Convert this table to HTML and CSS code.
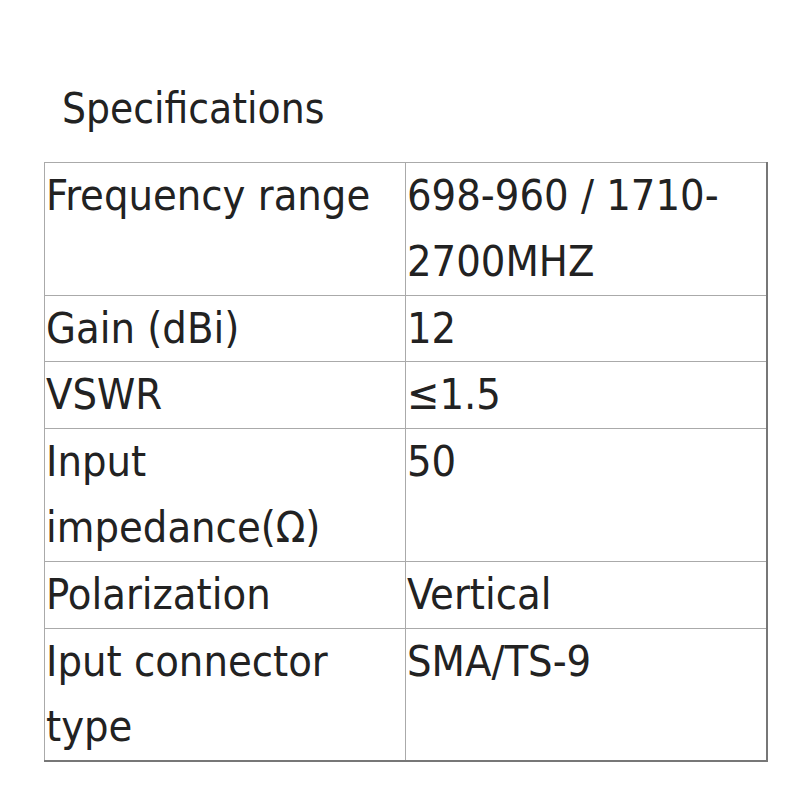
FILE: index.html
```html
<!DOCTYPE html>
<html>
<head>
<meta charset="utf-8">
<link rel="stylesheet" href="styles.css">
</head>
<body>
<div class="page">
  <h2 class="title">Specifications</h2>
  <table class="specs">
    <tr><td class="k">Frequency range</td><td class="v">698-960 / 1710-2700MHZ</td></tr>
    <tr><td class="k">Gain (dBi)</td><td class="v">12</td></tr>
    <tr><td class="k">VSWR</td><td class="v">≤1.5</td></tr>
    <tr><td class="k">Input impedance(Ω)</td><td class="v">50</td></tr>
    <tr><td class="k">Polarization</td><td class="v">Vertical</td></tr>
    <tr><td class="k">Iput connector type</td><td class="v">SMA/TS-9</td></tr>
  </table>
</div>
</body>
</html>
```
FILE: styles.css
```css
html, body {
  margin: 0;
  padding: 0;
  background: #fff;
}
.page {
  padding: 79px 0 0 44px;
  font-family: "DejaVu Sans Condensed", "DejaVu Sans", sans-serif;
  color: #222;
}
.title {
  margin: 0 0 24px 18px;
  font-size: 42px;
  font-weight: normal;
  line-height: 59px;
}
.specs {
  border-collapse: collapse;
  width: 724px;
  font-size: 43px;
  line-height: 65.8px;
  border-top: 1px solid #888;
  border-left: 1px solid #888;
  border-right: 2px solid #777;
  border-bottom: 2px solid #777;
}
.specs td {
  border: 1px solid #aaa;
  padding: 0 0 0 1px;
  vertical-align: top;
}
.specs .k {
  width: 359px;
}
```
